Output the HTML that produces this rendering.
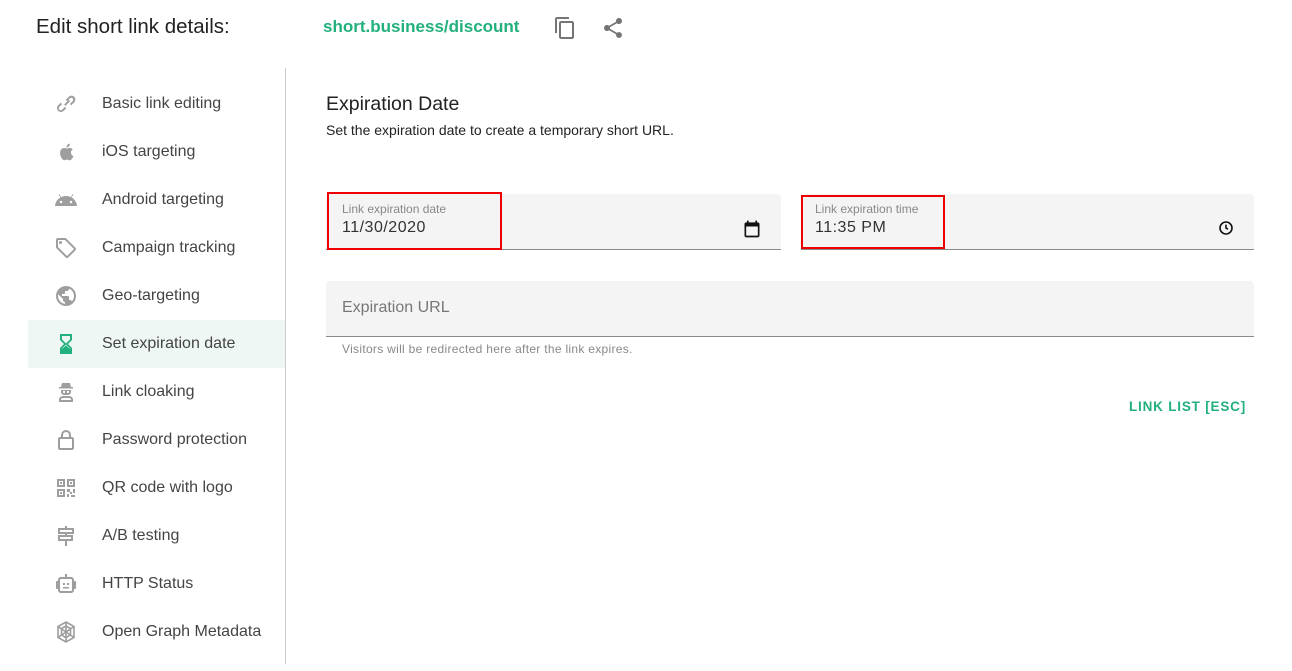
<!DOCTYPE html>
<html><head><meta charset="utf-8"><style>
*{box-sizing:border-box;margin:0;padding:0}
body{width:1292px;height:671px;background:#fff;font-family:"Liberation Sans",Roboto,sans-serif;color:#333;position:relative;overflow:hidden}
.abs{position:absolute}
.title{left:36px;top:15px;font-size:20.5px;color:#222}
.link{left:323px;top:17px;font-size:17px;font-weight:bold;color:#22b07d}
.side{left:28px;top:80px;width:257px}
.item{height:48px;display:flex;align-items:center;font-size:16px;color:#444}
.item svg{width:24px;height:24px;margin-left:26px;margin-right:24px;fill:#9e9e9e}
.item.sel{background:#eef7f3}
.item.sel svg{fill:#22b07d}
.div{left:285px;top:68px;width:1px;height:596px;background:#ccc}
.h{left:326px;top:93px;font-size:19.5px;color:#222}
.sub{left:326px;top:122px;font-size:14px;color:#222}
.f{background:#f4f4f4;border-bottom:1px solid #8a8a8a;border-radius:4px 4px 0 0}
.lab{font-size:12px;color:#888}
.val{font-size:16px;color:#333;letter-spacing:.5px}
.red{border:2px solid #e00}
</style></head><body>
<div class="abs title">Edit short link details:</div>
<div class="abs link">short.business/discount</div>
<svg class="abs" style="left:553px;top:16px" width="24" height="24" viewBox="0 0 24 24" fill="#757575"><path d="M16 1H4c-1.100 0-2 .9-2 2v14h2V3h12V1zm3 4H8c-1.100 0-2 .9-2 2v14c0 1.100.9 2 2 2h11c1.100 0 2-.9 2-2V7c0-1.100-.9-2-2-2zm0 16H8V7h11v14z"/></svg>
<svg class="abs" style="left:601px;top:16px" width="24" height="24" viewBox="0 0 24 24" fill="#757575"><path d="M18 16.080c-.76 0-1.440.3-1.960.77L8.910 12.700c.05-.23.09-.46.09-.7s-.04-.47-.09-.7l7.050-4.110c.54.5 1.250.81 2.040.81 1.660 0 3-1.340 3-3s-1.340-3-3-3-3 1.340-3 3c0 .24.04.47.09.7L8.040 9.810C7.500 9.310 6.790 9 6 9c-1.660 0-3 1.340-3 3s1.340 3 3 3c.79 0 1.500-.31 2.040-.81l7.120 4.160c-.05.21-.08.43-.08.65 0 1.610 1.310 2.920 2.920 2.920s2.920-1.310 2.920-2.920-1.310-2.920-2.920-2.920z"/></svg>
<div class="abs div"></div>
<div class="abs side">
<div class="item"><svg viewBox="0 0 24 24"><path d="M10.600 13.400a1 1 0 0 1 0-1.400l3.500-3.500a1 1 0 1 1 1.400 1.400L12 13.400a1 1 0 0 1-1.400 0zM7 20a4 4 0 0 1-2.800-6.800l2.500-2.500 1.400 1.400-2.500 2.500a2 2 0 1 0 2.800 2.800l2.500-2.500 1.400 1.400-2.500 2.500A4 4 0 0 1 7 20zm10.300-6.700-1.400-1.400 2.500-2.500a2 2 0 1 0-2.800-2.800l-2.500 2.500-1.400-1.400 2.500-2.500a4 4 0 1 1 5.600 5.600z"/></svg>Basic link editing</div>
<div class="item"><svg viewBox="0 0 24 24"><path d="M17 12.500c0-2 1.600-2.900 1.700-3-1-1.400-2.400-1.600-2.900-1.600-1.200-.1-2.400.7-3 .7s-1.600-.7-2.600-.7C8.800 8 7.500 8.700 6.800 10c-1.500 2.500-.4 6.300 1 8.300.7 1 1.500 2.100 2.600 2 1-.1 1.400-.7 2.700-.7s1.600.7 2.700.7c1.100 0 1.800-1 2.500-2 .8-1.100 1.100-2.200 1.100-2.300-.1 0-2.400-.9-2.400-3.500zM15 6.300c.6-.7 1-1.700.9-2.700-.9 0-1.900.6-2.500 1.300-.5.600-1 1.600-.9 2.600 1 .1 1.900-.5 2.500-1.200z"/></svg>iOS targeting</div>
<div class="item"><svg viewBox="0 0 24 24"><path d="M17.600 9.500l1.800-3.100-.7-.4-1.800 3.200A11 11 0 0 0 12 8c-1.800 0-3.500.4-4.900 1.200L5.300 6l-.7.4 1.800 3.100C3.400 11.200 1.300 14.300 1 18h22c-.3-3.700-2.400-6.800-5.400-8.500zM7 15.300a1.200 1.200 0 1 1 0-2.500 1.200 1.200 0 0 1 0 2.500zm10 0a1.200 1.200 0 1 1 0-2.500 1.200 1.200 0 0 1 0 2.500z"/></svg>Android targeting</div>
<div class="item"><svg viewBox="0 0 24 24"><path d="M21.400 11.600l-9-9C12 2.200 11.500 2 11 2H4c-1.100 0-2 .9-2 2v7c0 .6.2 1.100.6 1.400l9 9c.4.4.9.6 1.400.6s1-.2 1.400-.6l7-7c.4-.4.6-.9.6-1.400s-.2-1-.6-1.400zM13 20l-9-9V4h7l9 9-7 7zM6.500 5a1.500 1.500 0 1 1 0 3 1.500 1.500 0 0 1 0-3z"/></svg>Campaign tracking</div>
<div class="item"><svg viewBox="0 0 24 24"><path d="M12 2a10 10 0 1 0 0 20 10 10 0 0 0 0-20zm-1 17.900A8 8 0 0 1 4 12c0-.6.1-1.200.2-1.800L9 15v1c0 1.100.9 2 2 2v1.900zm6.900-2.500c-.3-.8-1-1.400-1.900-1.400h-1v-3c0-.6-.4-1-1-1H8v-2h2c.6 0 1-.4 1-1V7h2c1.100 0 2-.9 2-2v-.4a8 8 0 0 1 2.900 12.800z"/></svg>Geo-targeting</div>
<div class="item sel"><svg viewBox="0 0 24 24"><path d="M6 2v6l4 4-4 4v6h12v-6l-4-4 4-4V2H6zm10 14.500V20H8v-3.500l4-4 4 4zM8 4h8v3.500l-4 4-4-4V4z M8 20h8v-3l-4-3.500L8 17z"/></svg>Set expiration date</div>
<div class="item"><svg viewBox="0 0 24 24"><path d="M8 3h8l1 4h2v1.500H5V7h2l1-4zm-1 7h10v2a3 3 0 0 1-3 3h-4a3 3 0 0 1-3-3v-2zm2 1v1a1 1 0 0 0 1 1h1v-2H9zm4 0v2h1a1 1 0 0 0 1-1v-1h-2zM5 22v-2.500C5 17.500 7 16 9 16h6c2 0 4 1.500 4 3.500V22H5zm2-2h10v-.5c0-.8-.9-1.500-2-1.500H9c-1.100 0-2 .7-2 1.500v.5z"/></svg>Link cloaking</div>
<div class="item"><svg viewBox="0 0 24 24"><path d="M18 9h-1V7a5 5 0 0 0-10 0v2H6c-1.100 0-2 .9-2 2v9c0 1.100.9 2 2 2h12c1.100 0 2-.9 2-2v-9c0-1.100-.9-2-2-2zM9 7a3 3 0 0 1 6 0v2H9V7zm9 13H6v-9h12v9z"/></svg>Password protection</div>
<div class="item"><svg viewBox="0 0 24 24"><path d="M3 3h8v8H3V3zm2 2v4h4V5H5zm8-2h8v8h-8V3zm2 2v4h4V5h-4zM3 13h8v8H3v-8zm2 2v4h4v-4H5zm1-9h2v2H6zm10 0h2v2h-2zM6 16h2v2H6zm7-3h3v3h-3zm3 3h2v2h-2zm-3 2h2v3h-2zm4 1h4v2h-4zm2-6h2v4h-2z"/></svg>QR code with logo</div>
<div class="item"><svg viewBox="0 0 24 24"><path d="M11 2h2v2h7v6h-7v1h6v6h-6v5h-2v-5H4v-6h7v-1H4V4h7V2zM6 6v2h12V6H6zm0 7v2h11v-2H6z"/></svg>A/B testing</div>
<div class="item"><svg viewBox="0 0 24 24"><path d="M11 2h2v3h4c1.700 0 3 1.300 3 3v1h1c.6 0 1 .4 1 1v6c0 .6-.4 1-1 1h-1v1c0 1.700-1.300 3-3 3H7c-1.700 0-3-1.300-3-3v-1H3c-.6 0-1-.4-1-1v-6c0-.6.4-1 1-1h1V8c0-1.700 1.300-3 3-3h4V2zM7 7c-.6 0-1 .4-1 1v10c0 .6.4 1 1 1h10c.6 0 1-.4 1-1V8c0-.6-.4-1-1-1H7zm2 4h2v2H9zm4 0h2v2h-2zm-4 4h6v1.500H9z"/></svg>HTTP Status</div>
<div class="item"><svg viewBox="0 0 24 24" style="fill:none;stroke:#9e9e9e;stroke-width:1.600"><path d="M12 2l8 4.500v11L12 22l-8-4.500v-11z M12 6l4.500 2.500v6L12 18l-4.500-3.500v-6z M12 2v20 M4 6.500l16 11 M20 6.500l-16 11"/></svg>Open Graph Metadata</div>
</div>

<div class="abs h">Expiration Date</div>
<div class="abs sub">Set the expiration date to create a temporary short URL.</div>

<div class="abs f" style="left:326px;top:194px;width:455px;height:56px"></div>
<div class="abs red" style="left:327px;top:192px;width:175px;height:58px"></div>
<div class="abs lab" style="left:342px;top:202px">Link expiration date</div>
<div class="abs val" style="left:342px;top:219px">11/30/2020</div>
<svg class="abs" style="left:742px;top:219px" width="20" height="20" viewBox="0 0 24 24" fill="#111"><path d="M19 4h-1V2h-2v2H8V2H6v2H5c-1.100 0-2 .9-2 2v14c0 1.100.9 2 2 2h14c1.100 0 2-.9 2-2V6c0-1.100-.9-2-2-2zm0 16H5V9h14v11z"/></svg>

<div class="abs f" style="left:801px;top:194px;width:453px;height:56px"></div>
<div class="abs red" style="left:801px;top:195px;width:144px;height:54px"></div>
<div class="abs lab" style="left:815px;top:202px">Link expiration time</div>
<div class="abs val" style="left:815px;top:219px">11:35 PM</div>
<svg class="abs" style="left:1218px;top:220px" width="16" height="16" viewBox="0 0 24 24" fill="none" stroke="#111" stroke-width="2.400"><circle cx="12" cy="12" r="9"/><path d="M12 7v5l3 2"/></svg>

<div class="abs f" style="left:326px;top:281px;width:928px;height:56px"></div>
<div class="abs" style="left:342px;top:299px;font-size:16px;color:#777">Expiration URL</div>
<div class="abs" style="left:342px;top:342px;font-size:12px;color:#888;letter-spacing:.3px">Visitors will be redirected here after the link expires.</div>

<div class="abs" style="left:1129px;top:399px;font-size:13.5px;font-weight:bold;color:#22b07d;letter-spacing:.8px">LINK LIST [ESC]</div>
</body></html>
